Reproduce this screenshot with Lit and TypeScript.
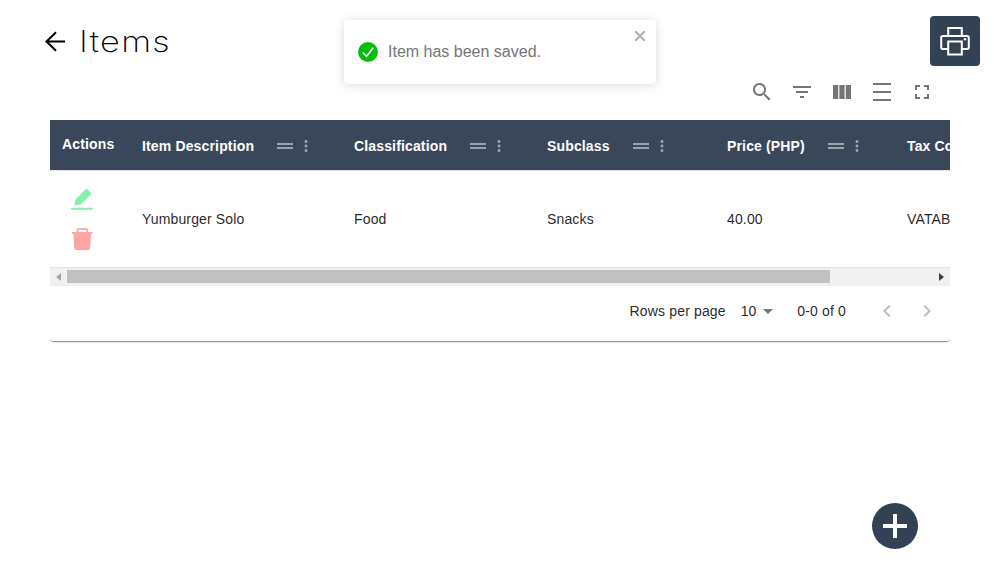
import { LitElement, html, svg, css } from "lit";
import { customElement } from "lit/decorators.js";

const icon = (d: string, size = 24) =>
  html`<svg width=${size} height=${size} viewBox="0 0 24 24" fill="currentColor">${svg`<path d=${d} />`}</svg>`;

const SEARCH =
  "M15.5 14h-.79l-.28-.27C15.41 12.59 16 11.11 16 9.5 16 5.91 13.09 3 9.5 3S3 5.91 3 9.5 5.91 16 9.5 16c1.61 0 3.09-.59 4.23-1.57l.27.28v.79l5 4.99L20.49 19l-4.99-5zm-6 0C7.01 14 5 11.99 5 9.5S7.01 5 9.5 5 14 7.01 14 9.5 11.99 14 9.5 14z";
const FILTER = "M10 18h4v-2h-4v2zM3 6v2h18V6H3zm3 7h12v-2H6v2z";
const COLUMNS = "M3 5h5.2v14H3zM9.4 5h5.2v14H9.4zM15.8 5H21v14h-5.2z";
const DENSITY = "M3 3h18v2H3zM3 11h18v2H3zM3 19h18v2H3z";
const FULLSCREEN = "M7 14H5v5h5v-2H7v-3zm-2-4h2V7h3V5H5v5zm12 7h-3v2h5v-5h-2v3zM14 5v2h3v3h2V5h-5z";
const DRAG = "M20 9H4v2h16V9zM4 15h16v-2H4v2z";
const MORE =
  "M12 8c1.1 0 2-.9 2-2s-.9-2-2-2-2 .9-2 2 .9 2 2 2zm0 2c-1.1 0-2 .9-2 2s.9 2 2 2 2-.9 2-2-.9-2-2-2zm0 6c-1.1 0-2 .9-2 2s.9 2 2 2 2-.9 2-2-.9-2-2-2z";
const LEFT = "M15.41 7.41L14 6l-6 6 6 6 1.41-1.41L10.83 12z";
const RIGHT = "M10 6L8.59 7.41 13.17 12l-4.58 4.59L10 18l6-6z";

const COLS = [
  { label: "Item Description", value: "Yumburger Solo" },
  { label: "Classification", value: "Food" },
  { label: "Subclass", value: "Snacks" },
  { label: "Price (PHP)", value: "40.00" },
  { label: "Tax Code", value: "VATABLE" },
];

@customElement("app-root")
export class AppRoot extends LitElement {
  static styles = css`
    :host {
      display: block;
      position: relative;
      height: 581px;
      overflow: hidden;
      background: #fff;
      font-family: "Liberation Sans", Arial, sans-serif;
      font-size: 14px;
      color: rgba(0, 0, 0, 0.87);
    }
    * { box-sizing: border-box; }
    svg { display: block; flex: none; }
    .head {
      display: flex;
      justify-content: space-between;
      padding: 16px 20px 0 44px;
      height: 72px;
    }
    .title { display: flex; align-items: center; height: 50px; gap: 14px; color: #000; }
    .title h1 {
      margin: 0;
      font: 200 29.5px/40px Inter, sans-serif;
      letter-spacing: 1.1px;
      transform: scaleX(1.165);
      transform-origin: left;
    }
    .print {
      display: flex;
      align-items: center;
      justify-content: center;
      width: 50px;
      height: 50px;
      border-radius: 4px;
      background: #334155;
    }
    .tools {
      display: flex;
      justify-content: flex-end;
      align-items: center;
      height: 40px;
      padding-right: 66px;
      gap: 16px;
      color: #757575;
    }
    .paper {
      margin: 8px 50px 0;
      height: 221px;
      border-radius: 4px;
      box-shadow: 0 2px 1px -1px rgba(0,0,0,.3), 0 1px 1px 0 rgba(0,0,0,.14), 0 1px 3px 0 rgba(0,0,0,.12);
      clip-path: inset(0 0 -8px 0);
    }
    .table { overflow: hidden; height: 148px; }
    .row {
      display: grid;
      grid-template-columns: 80px 212px 193px 180px 180px 215px;
      width: 1060px;
    }
    .hrow {
      height: 51px;
      background: #3a475a;
      border-bottom: 1px solid #e0e0e0;
      color: #fff;
      font-weight: 700;
      letter-spacing: 0.15px;
    }
    .cell { display: flex; align-items: center; padding-left: 12px; white-space: nowrap; }
    .hrow .cell { padding-top: 2px; }
    .hrow .first { padding-bottom: 2px; padding-top: 0; }
    .grip { margin-left: 19px; color: #9ca3ad; }
    .dots { color: #9ca3ad; }
    .brow { height: 97px; border-bottom: 1px solid #e0e0e0; letter-spacing: 0.15px; }
    .acts { display: flex; flex-direction: column; align-items: center; padding: 17px 16px 0 0; gap: 16px; }
    .scroll { display: flex; align-items: center; height: 18px; padding-bottom: 1px; background: #f0f0f0; }
    .arrow { width: 17px; display: flex; justify-content: center; }
    .track { flex: 1; }
    .thumb { width: 763px; height: 13px; background: #c1c1c1; }
    .pager {
      display: flex;
      justify-content: flex-end;
      align-items: center;
      height: 50px;
      padding-right: 11px;
      letter-spacing: 0.15px;
    }
    .count { margin: 0 29px 0 24px; }
    .size { margin: -1px 7px 0 15px; letter-spacing: 0; }
    .nav { color: #bdbdbd; }
    .nav + .nav { margin-left: 16px; }
    .toast {
      position: absolute;
      left: 344px;
      top: 20px;
      width: 312px;
      height: 64px;
      display: flex;
      align-items: center;
      padding-left: 14px;
      gap: 10px;
      border-radius: 4px;
      background: #fff;
      box-shadow: 0 1px 10px 0 rgba(0,0,0,.1), 0 2px 15px 0 rgba(0,0,0,.05);
      color: #757575;
      font-size: 16px;
    }
    .close { position: absolute; right: 10px; top: 10px; }
    .fab {
      position: absolute;
      left: 872px;
      top: 503px;
      width: 46px;
      height: 46px;
      border-radius: 50%;
      background: #334155;
      display: flex;
      align-items: center;
      justify-content: center;
    }
  `;

  render() {
    return html`
      <div class="head">
        <div class="title">
          <svg width="21" height="21" viewBox="0 0 21 21" fill="none" stroke="#000" stroke-width="2"><path d="M21 10.5H2.500M12 1.200L2.500 10.500L12 19.800" /></svg>
          <h1>Items</h1>
        </div>
        <div class="print">
          <svg width="32" height="32" viewBox="0 0 32 32" fill="none" stroke="#fff" stroke-width="2">
            <path d="M9.200 11V3H22.800V11M9 24H4Q2.200 24 2.200 22.200V12.800Q2.200 11 4 11H28Q29.800 11 29.800 12.800V22.200Q29.800 24 28 24H23M9.200 16.500H22.800V29.500H9.200z" />
            <circle cx="26" cy="14.200" r="1.200" fill="#fff" stroke="none" />
          </svg>
        </div>
      </div>
      <div class="tools">${[SEARCH, FILTER, COLUMNS, DENSITY, FULLSCREEN].map((d) => icon(d))}</div>
      <div class="paper">
        <div class="table">
          <div class="row hrow">
            <div class="cell first">Actions</div>
            ${COLS.map(
              (c) => html`<div class="cell">
                ${c.label}<span class="grip">${icon(DRAG)}</span><span class="dots">${icon(MORE, 18)}</span>
              </div>`
            )}
          </div>
          <div class="row brow">
            <div class="acts">
              <svg width="22" height="23" viewBox="0 0 22 23" fill="#86efac"><path d="M3.200 17.200L4.200 11.800L14.900 1.100Q15.600.500 16.300 1.200L20.300 5.200Q20.700 5.700 20.200 6.200L9.600 16.600Z" /><rect x="0" y="19.700" width="22" height="2" rx="1" /></svg>
              <svg width="22" height="23" viewBox="0 0 22 23" fill="#fca5a5"><path d="M1 5H21.300V7H20L19.200 20.800Q19 23 17 23H5.500Q3.400 23 3.200 20.800L2.400 7H1Z" /><path d="M6.200 5V3.300Q6.200 1.900 7.600 1.900H14.900Q16.300 1.900 16.300 3.300V5" fill="none" stroke="#fca5a5" stroke-width="1.700" /></svg>
            </div>
            ${COLS.map((c) => html`<div class="cell">${c.value}</div>`)}
          </div>
        </div>
        <div class="scroll">
          <div class="arrow"><svg width="5" height="8" viewBox="0 0 5 8" fill="#a3a3a3"><path d="M5 0V8L0 4z" /></svg></div>
          <div class="track"><div class="thumb"></div></div>
          <div class="arrow"><svg width="5" height="8" viewBox="0 0 5 8" fill="#404040"><path d="M0 0V8L5 4z" /></svg></div>
        </div>
        <div class="pager">
          <span>Rows per page</span><span class="size">10</span>
          <svg width="10" height="5" viewBox="0 0 10 5" fill="#757575"><path d="M0 0H10L5 5z" /></svg>
          <span class="count">0-0 of 0</span>
          <span class="nav">${icon(LEFT)}</span><span class="nav">${icon(RIGHT)}</span>
        </div>
      </div>
      <div class="toast">
        <svg width="20" height="20" viewBox="0 0 20 20"><circle cx="10" cy="10" r="10" fill="#07bc0c" /><path d="M4.800 10.600L8.600 14.400L15.200 5.800" fill="none" stroke="#fff" stroke-width="1.600" /></svg>
        <span>Item has been saved.</span>
        <svg class="close" width="12" height="12" viewBox="0 0 12 12" fill="none" stroke="#b2b2b2" stroke-width="2.300"><path d="M1.300 1.300L10.700 10.700M10.700 1.300L1.300 10.700" /></svg>
      </div>
      <div class="fab">
        <svg width="24" height="24" viewBox="0 0 24 24" fill="#fff"><path d="M10 0h4v10h10v4H14v10h-4V14H0v-4h10z" /></svg>
      </div>
    `;
  }
}
